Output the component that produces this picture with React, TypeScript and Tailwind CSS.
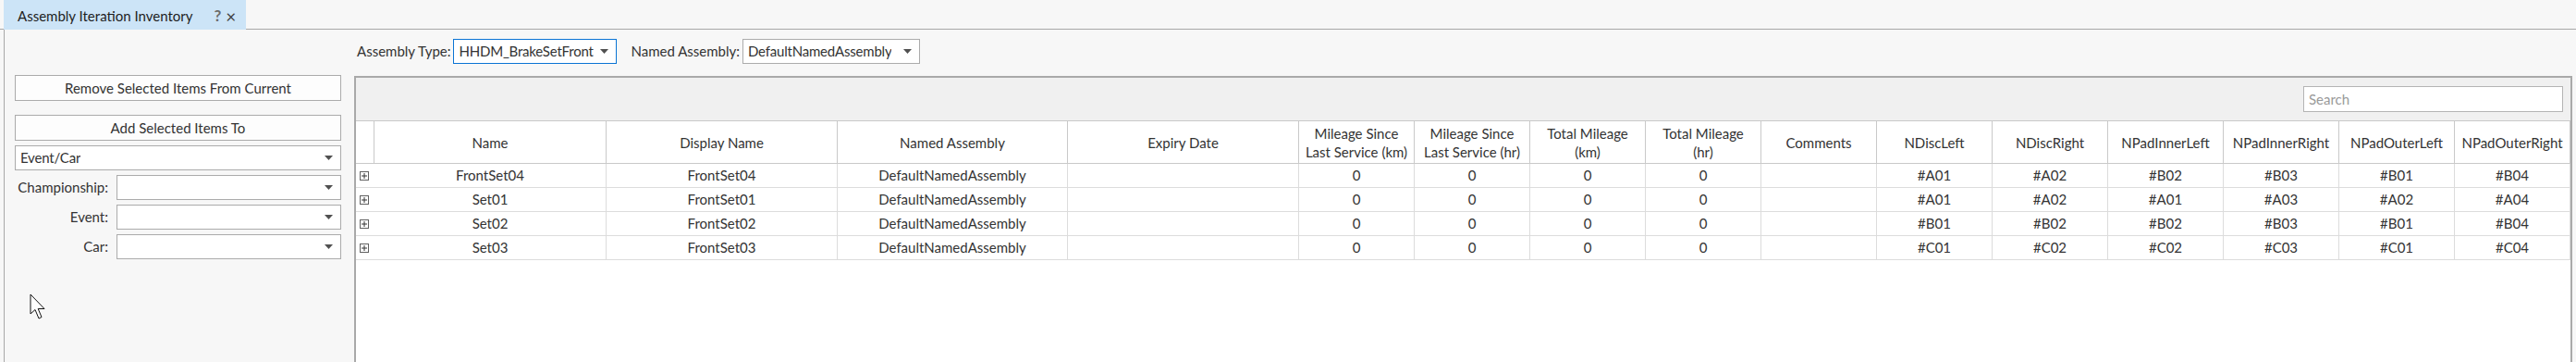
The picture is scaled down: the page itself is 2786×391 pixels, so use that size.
import { ReactNode } from "react"

const COLUMNS = [
  { label: ["Name"], w: "w-[251px]" },
  { label: ["Display Name"], w: "w-[250px]" },
  { label: ["Named Assembly"], w: "w-[249px]" },
  { label: ["Expiry Date"], w: "w-[250px]" },
  { label: ["Mileage Since", "Last Service (km)"], w: "w-[125px]" },
  { label: ["Mileage Since", "Last Service (hr)"], w: "w-[125px]" },
  { label: ["Total Mileage", "(km)"], w: "w-[125px]" },
  { label: ["Total Mileage", "(hr)"], w: "w-[125px]" },
  { label: ["Comments"], w: "w-[125px]" },
  { label: ["NDiscLeft"], w: "w-[125px]" },
  { label: ["NDiscRight"], w: "w-[125px]" },
  { label: ["NPadInnerLeft"], w: "w-[125px]" },
  { label: ["NPadInnerRight"], w: "w-[125px]" },
  { label: ["NPadOuterLeft"], w: "w-[125px]" },
  { label: ["NPadOuterRight"], w: "w-[125px]" },
]

const ROWS = [
  ["FrontSet04", "FrontSet04", "DefaultNamedAssembly", "", "0", "0", "0", "0", "", "#A01", "#A02", "#B02", "#B03", "#B01", "#B04"],
  ["Set01", "FrontSet01", "DefaultNamedAssembly", "", "0", "0", "0", "0", "", "#A01", "#A02", "#A01", "#A03", "#A02", "#A04"],
  ["Set02", "FrontSet02", "DefaultNamedAssembly", "", "0", "0", "0", "0", "", "#B01", "#B02", "#B02", "#B03", "#B01", "#B04"],
  ["Set03", "FrontSet03", "DefaultNamedAssembly", "", "0", "0", "0", "0", "", "#C01", "#C02", "#C02", "#C03", "#C01", "#C04"],
]

function Caret() {
  return (
    <svg width="9" height="5" viewBox="0 0 9 5" className="shrink-0">
      <path d="M0 0 L9 0 L4.5 5 Z" fill="#505050" />
    </svg>
  )
}

function Dropdown({ value, w, active }: { value?: string; w: string; active?: boolean }) {
  return (
    <div
      className={`flex h-[27px] items-center justify-between gap-[6px] border bg-white pl-[5px] pr-[8px] ${w} ${
        active ? "border-[#0a74d4]" : "border-[#ababab]"
      }`}
    >
      <span className="truncate tracking-[-0.2px]">{value}</span>
      <Caret />
    </div>
  )
}

function Button({ children }: { children: ReactNode }) {
  return (
    <div className="flex h-[28px] items-center justify-center border border-[#ababab] bg-[#fdfdfd]">
      {children}
    </div>
  )
}

function Expander() {
  return (
    <svg width="10" height="10" viewBox="0 0 10 10">
      <rect x="0.5" y="0.5" width="9" height="9" fill="white" stroke="#606060" />
      <path d="M2 5 H8 M5 2 V8" stroke="#303030" />
    </svg>
  )
}

function Cursor() {
  return (
    <svg width="18" height="30" viewBox="0 0 18 30" className="absolute left-[32px] top-[317px]">
      <path
        d="M1 1 L1 22 L6 17.5 L10 27 L13 25.5 L9.2 16.5 L16 16.5 Z"
        fill="white"
        stroke="#111"
        strokeWidth="1"
        strokeLinejoin="round"
      />
    </svg>
  )
}

export default function App() {
  return (
    <div className="relative flex h-[391px] w-[2786px] flex-col overflow-hidden bg-[#f7f7f7] font-['Lato',sans-serif] text-[15px] text-[#333]">
      {/* Tab strip */}
      <div className="flex h-[32px] shrink-0">
        <div className="w-[4px] border-b border-[#a8a8a8]" />
        <div className="flex w-[262px] items-center bg-[#cce4f7] pl-[15px] pt-[2px]">
          <span className="text-[#1e1e1e]">Assembly Iteration Inventory</span>
          <span className="ml-[23px] text-[17px] font-bold text-[#6a6a6a]">?</span>
          <span className="ml-[5px] text-[19px] leading-none text-[#444]">×</span>
        </div>
        <div className="flex-1 border-b border-[#a8a8a8]" />
      </div>

      <div className="ml-[4px] flex min-h-0 flex-1 border-l border-[#a8a8a8]">
        {/* Left column */}
        <div className="flex w-[364px] shrink-0 flex-col pl-[11px] pt-[49px]">
          <Button>Remove Selected Items From Current</Button>
          <div className="mt-[15px]">
            <Button>Add Selected Items To</Button>
          </div>
          <div className="mt-[5px]">
            <Dropdown value="Event/Car" w="w-full" />
          </div>
          {["Championship:", "Event:", "Car:"].map((l) => (
            <div key={l} className="mt-[5px] flex items-center">
              <span className="w-[101px] text-right">{l}</span>
              <div className="ml-[9px] flex-1">
                <Dropdown w="w-full" />
              </div>
            </div>
          ))}
        </div>

        {/* Right column */}
        <div className="ml-[14px] flex min-w-0 flex-1 flex-col pr-[4px]">
          <div className="flex h-[50px] shrink-0 items-start pl-[3px] pt-[10px]">
            <div className="flex items-center">
              <span className="mr-[3px]">Assembly Type:</span>
              <Dropdown value="HHDM_BrakeSetFront" w="w-[177px]" active />
              <span className="ml-[15px] mr-[3px]">Named Assembly:</span>
              <Dropdown value="DefaultNamedAssembly" w="w-[192px]" />
            </div>
          </div>

          {/* Grid panel */}
          <div className="flex flex-1 flex-col border-x-2 border-t-2 border-[#a9a9a9] bg-white">
            <div className="flex h-[47px] shrink-0 justify-end border-b border-[#c9c9c9] bg-[#f0f0f0] pr-[8px] pt-[9px]">
              <div className="flex h-[28px] w-[281px] items-center border border-[#b4b4b4] bg-white pl-[5px] text-[#9a9a9a]">
                Search
              </div>
            </div>

            <div className="flex h-[46px] shrink-0 border-b border-[#c9c9c9]">
              <div className="w-[20px] shrink-0 border-r border-[#c9c9c9]" />
              {COLUMNS.map((c, i) => (
                <div
                  key={i}
                  className={`flex shrink-0 flex-col items-center justify-center border-r border-[#c9c9c9] leading-[20px] ${c.w}`}
                >
                  {c.label.map((t) => (
                    <span key={t}>{t}</span>
                  ))}
                </div>
              ))}
            </div>

            {ROWS.map((r, ri) => (
              <div key={ri} className="flex h-[26px] shrink-0 border-b border-[#dcdcdc]">
                <div className="flex w-[20px] shrink-0 items-center pl-[4px]">
                  <Expander />
                </div>
                {r.map((v, ci) => (
                  <div
                    key={ci}
                    className={`flex shrink-0 items-center justify-center border-r border-[#dcdcdc] ${COLUMNS[ci].w}`}
                  >
                    {v}
                  </div>
                ))}
              </div>
            ))}
          </div>
        </div>
      </div>

      <Cursor />
    </div>
  )
}
